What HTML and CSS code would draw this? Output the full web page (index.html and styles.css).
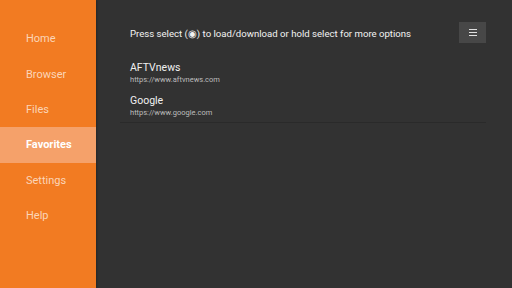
FILE: index.html
```html
<!DOCTYPE html>
<html lang="en">
<head>
<meta charset="UTF-8">
<title>Downloader - Favorites</title>
<link rel="stylesheet" href="styles.css">
</head>
<body>
<div class="app">
  <nav class="sidebar">
    <div class="nav-item">Home</div>
    <div class="nav-item">Browser</div>
    <div class="nav-item">Files</div>
    <div class="nav-item active">Favorites</div>
    <div class="nav-item">Settings</div>
    <div class="nav-item">Help</div>
  </nav>
  <main class="main">
    <div class="topbar">
      <span class="hint">Press select (&#9673;) to load/download or hold select for more options</span>
      <button class="menu-btn" title="Menu">
        <span></span><span></span><span></span>
      </button>
    </div>
    <div class="fav-list">
      <div class="fav">
        <div class="fav-name">AFTVnews</div>
        <div class="fav-url">https://www.aftvnews.com</div>
      </div>
      <div class="fav">
        <div class="fav-name">Google</div>
        <div class="fav-url">https://www.google.com</div>
      </div>
    </div>
  </main>
</div>
</body>
</html>
```

FILE: styles.css
```css
*, *::before, *::after { box-sizing: border-box; margin: 0; padding: 0; }
body {
  width: 512px;
  height: 288px;
  overflow: hidden;
  font-family: Roboto, 'Liberation Sans', sans-serif;
  background: #323232;
}
.app { display: flex; height: 288px; }

.sidebar {
  width: 96px;
  flex-shrink: 0;
  background: #f27b22;
  padding-top: 21px;
  box-shadow: 1px 0 2px #00000040;
}
.nav-item {
  height: 35.4px;
  padding-left: 26px;
  display: flex;
  align-items: center;
  font-size: 11px;
  color: #fbd5b8;
}
.nav-item.active {
  background: #f5a16a;
  color: #fff;
  font-weight: 700;
}

.main { flex: 1; padding: 22px 26px 0 24px; }
.topbar {
  display: flex;
  align-items: center;
  justify-content: space-between;
  padding-left: 10px;
  height: 21px;
}
.hint { font-size: 9.6px; color: #f2f2f2; padding-top: 2px; }
.menu-btn {
  width: 27px; height: 21px;
  background: #474747;
  border: none;
  display: flex;
  flex-direction: column;
  align-items: center;
  justify-content: center;
  gap: 2px;
}
.menu-btn span { width: 8px; height: 1px; background: #e0e0e0; }

.fav-list { margin-top: 18px; }
.fav { padding: 0 10px 6px; }
.fav + .fav { padding: 3px 10px 4px; border-bottom: 1px solid #2a2a2a; }
.fav-name { font-size: 10.5px; color: #f0f0f0; line-height: 13px; }
.fav-url { font-size: 7.5px; color: #bdbdbd; line-height: 11px; }
```
